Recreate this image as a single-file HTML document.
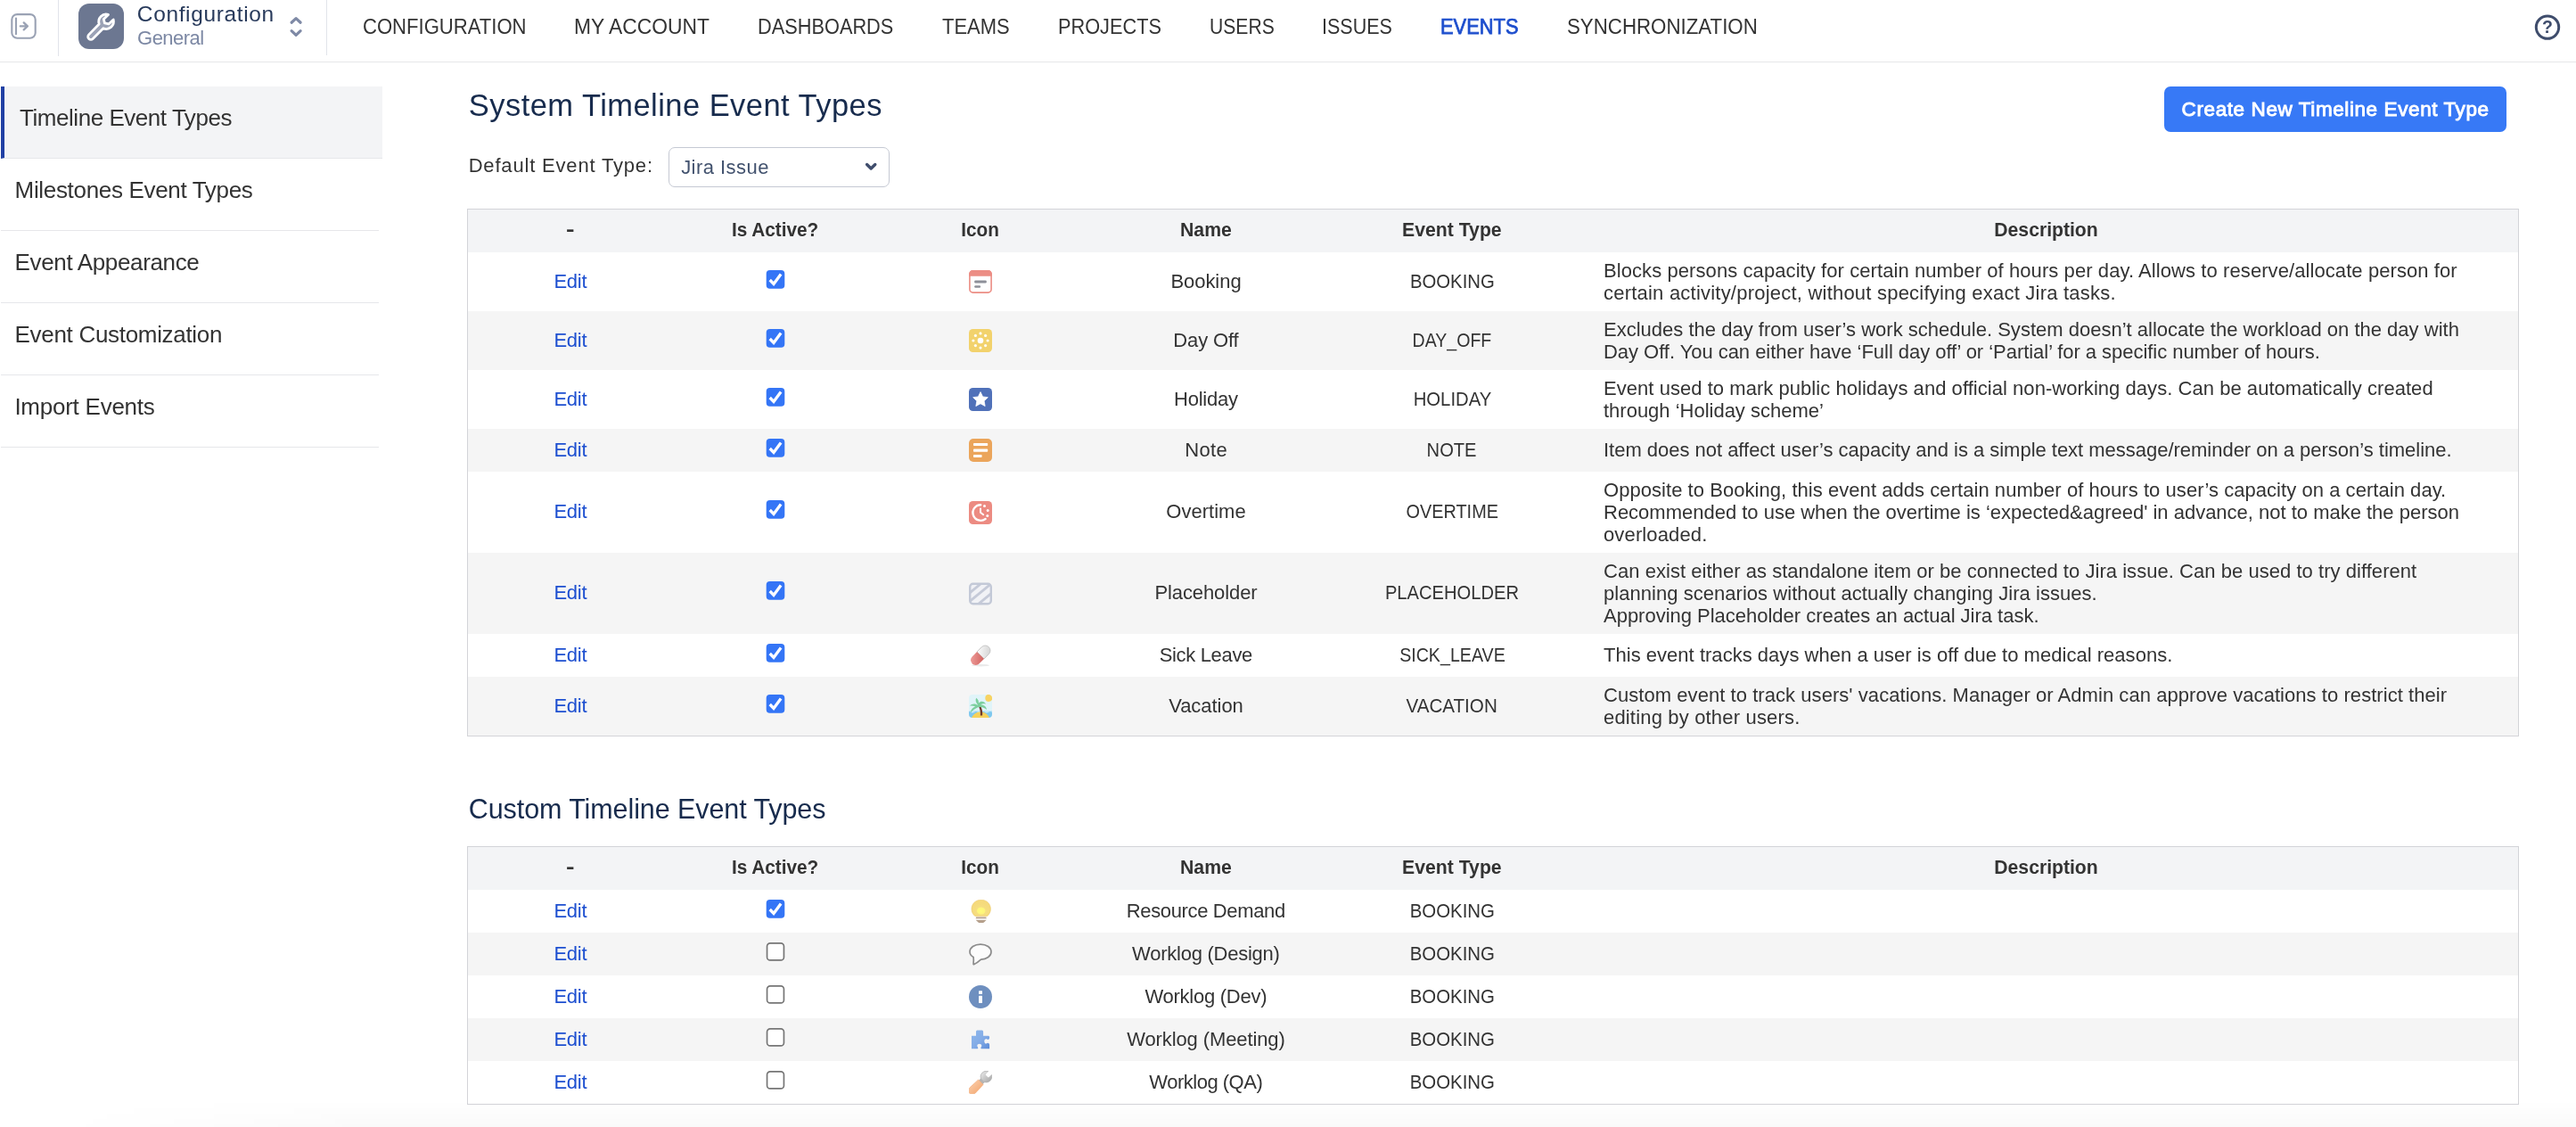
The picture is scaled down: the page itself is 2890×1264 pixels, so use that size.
<!DOCTYPE html>
<html lang="en"><head><meta charset="utf-8"><title>Timeline Event Types</title>
<style>
html,body{margin:0;padding:0}
body{width:2890px;height:1264px;position:relative;overflow:hidden;background:#fff;font-family:"Liberation Sans",sans-serif;color:#333}
#app{position:absolute;left:0;top:0;width:2890px;height:1264px;overflow:hidden;background:#fff;will-change:transform}
.t{position:absolute;white-space:nowrap;margin:0;padding:0;font-weight:400}
.abs{position:absolute}
.sb{-webkit-text-stroke:0.9px currentColor}
.sb2{-webkit-text-stroke:0.75px currentColor}
header{position:absolute;left:0;top:0;width:2890px;height:69px;border-bottom:1px solid #e6e7e9;background:#fff}
.vdiv{position:absolute;top:0;width:1px;height:63px;background:#e1e4ea}
a{text-decoration:none}
.side li{list-style:none}
.sbg{position:absolute;left:1px;width:424px;height:80px;border-bottom:1px solid #e6e7ea}
.sbg.act{background:#f3f4f6;border-left:4px solid #2040a4}
.side{margin:0;padding:0}
.tbl{position:absolute;left:524px;width:2302px;border:1px solid #d3d4d8;border-collapse:separate;border-spacing:0;table-layout:fixed;font-size:22px;line-height:25px;color:#333}
.tbl th,.tbl td{padding:0;text-align:center;vertical-align:middle;white-space:nowrap;font-weight:400}
.tbl th{height:48px;background:#f3f4f6;font-weight:700;color:#333}
.tbl th span{display:inline-block;position:relative;top:-2px}
.tbl tr.g td{background:#f5f5f5}
.tbl td.d{text-align:left;padding-left:32px}
.tbl a{color:#1d4fd0;text-decoration:none;position:relative;top:-1px}
.tbl .nm{position:relative;top:-1px}
.tbl .et{display:inline-block;transform:scaleX(0.905);position:relative;top:-1px}
.ic{display:block;margin:0 auto}
.cb{display:inline-block;width:22px;height:21px;vertical-align:top;position:relative;top:-1px}
.cb svg{display:block}
</style></head>
<body>
<div id="app">
<header>
<svg class="abs" style="left:10px;top:13px" width="33" height="33" viewBox="0 0 33 33"><rect x="3.300" y="3.100" width="26.400" height="26.600" rx="6" fill="none" stroke="#9aa2b4" stroke-width="2.100"/><path d="M8 7.500v17.800" stroke="#9aa2b4" stroke-width="2.100" stroke-linecap="round" fill="none"/><path d="M12.800 16.400h7.600M16.700 12.400l4.200 4-4.200 4" stroke="#9aa2b4" stroke-width="2.300" stroke-linecap="round" stroke-linejoin="round" fill="none"/></svg>
<div class="vdiv" style="left:65px"></div>
<svg class="abs" style="left:88px;top:4px" width="51" height="51" viewBox="0 0 51 51"><rect width="51" height="51" rx="12" fill="#6c7791"/><g transform="translate(0.2,0.5) scale(1.065)"><path d="M31.300 11.200a7.800 7.800 0 0 0-9.700 9.900L10.700 32.300a3 3 0 0 0 0 4.200l.100.100a3 3 0 0 0 4.200 0L26 25.600a7.800 7.800 0 0 0 10.600-9.200l-4.900 4.700-4.300-1-1-4.200z" fill="#9ba2b6" stroke="#fff" stroke-width="2.600" stroke-linejoin="round"/></g></svg>
<div class="t" style="left:153.82px;top:0.50px;font-size:24.5px;line-height:30px;color:#283a5b;letter-spacing:0.629px;">Configuration</div>
<div class="t" style="left:154.06px;top:29.50px;font-size:22px;line-height:26px;color:#7c88a4;letter-spacing:-0.516px;">General</div>
<svg class="abs" style="left:322px;top:16px" width="20" height="28" viewBox="0 0 20 28"><path d="M5.100 9.200l5-4.600 5 4.600M5.100 18.700l5 4.700 5-4.700" fill="none" stroke="#7f8aa6" stroke-width="3.200" stroke-linecap="round" stroke-linejoin="round"/></svg>
<div class="vdiv" style="left:366px;height:62px"></div>
<nav>
<a class="t" style="left:407.18px;top:16.00px;font-size:23.5px;line-height:28px;color:#333;transform:scaleX(0.9393);transform-origin:0 0;">CONFIGURATION</a>
<a class="t" style="left:643.99px;top:16.00px;font-size:23.5px;line-height:28px;color:#333;transform:scaleX(0.9717);transform-origin:0 0;">MY ACCOUNT</a>
<a class="t" style="left:849.99px;top:16.00px;font-size:23.5px;line-height:28px;color:#333;transform:scaleX(0.9259);transform-origin:0 0;">DASHBOARDS</a>
<a class="t" style="left:1056.55px;top:16.00px;font-size:23.5px;line-height:28px;color:#333;transform:scaleX(0.9350);transform-origin:0 0;">TEAMS</a>
<a class="t" style="left:1186.78px;top:16.00px;font-size:23.5px;line-height:28px;color:#333;transform:scaleX(0.9248);transform-origin:0 0;">PROJECTS</a>
<a class="t" style="left:1356.90px;top:16.00px;font-size:23.5px;line-height:28px;color:#333;transform:scaleX(0.8985);transform-origin:0 0;">USERS</a>
<a class="t" style="left:1482.99px;top:16.00px;font-size:23.5px;line-height:28px;color:#333;transform:scaleX(0.9156);transform-origin:0 0;">ISSUES</a>
<a class="t sb2" style="left:1615.95px;top:16.00px;font-size:23.2px;line-height:28px;color:#1d4ecd;transform:scaleX(0.9429);transform-origin:0 0;">EVENTS</a>
<a class="t" style="left:1758.44px;top:16.00px;font-size:23.5px;line-height:28px;color:#333;transform:scaleX(0.9484);transform-origin:0 0;">SYNCHRONIZATION</a>
</nav>
<svg class="abs" style="left:2840px;top:13px" width="36" height="36" viewBox="0 0 36 36"><circle cx="18" cy="17.600" r="12.700" fill="none" stroke="#3f4d6c" stroke-width="3"/><text x="18" y="24.300" text-anchor="middle" font-family="Liberation Sans, sans-serif" font-weight="700" font-size="19.500" fill="#3f4d6c">?</text></svg>
</header>
<ul class="side">
<li><div class="sbg act" style="top:97px"></div><a class="t" style="left:22.06px;top:115.60px;font-size:26px;line-height:32px;color:#333;letter-spacing:-0.461px;">Timeline Event Types</a></li>
<li><div class="sbg" style="top:178px"></div><a class="t" style="left:16.58px;top:196.60px;font-size:26px;line-height:32px;color:#333;letter-spacing:-0.329px;">Milestones Event Types</a></li>
<li><div class="sbg" style="top:259px"></div><a class="t" style="left:16.58px;top:277.60px;font-size:26px;line-height:32px;color:#333;letter-spacing:-0.353px;">Event Appearance</a></li>
<li><div class="sbg" style="top:340px"></div><a class="t" style="left:16.58px;top:358.60px;font-size:26px;line-height:32px;color:#333;letter-spacing:-0.311px;">Event Customization</a></li>
<li><div class="sbg" style="top:421px"></div><a class="t" style="left:16.38px;top:439.60px;font-size:26px;line-height:32px;color:#333;letter-spacing:-0.248px;">Import Events</a></li>
</ul>
<main>
<h1 class="t" style="left:525.77px;top:95.80px;font-size:34.5px;line-height:44px;color:#172b4d;letter-spacing:0.452px;">System Timeline Event Types</h1>
<div class="abs" style="left:2428px;top:97px;width:384px;height:51px;border-radius:7px;background:#3779f6"></div>
<div class="t sb" style="left:2447.60px;top:109.20px;font-size:22.5px;line-height:28px;color:#fff;letter-spacing:0.595px;">Create New Timeline Event Type</div>
<div class="t" style="left:525.64px;top:172.30px;font-size:22px;line-height:28px;color:#333;letter-spacing:0.821px;">Default Event Type:</div>
<div class="abs" style="left:750px;top:165px;width:246px;height:43px;border:1px solid #c5c9d3;border-radius:7px;background:#fff"></div>
<div class="t" style="left:764.17px;top:174.10px;font-size:22px;line-height:28px;color:#42526e;letter-spacing:0.462px;">Jira Issue</div>
<svg class="abs" style="left:966px;top:178px" width="22" height="18" viewBox="0 0 22 18"><path d="M6.600 6.500l4.600 4.500 4.600-4.500" fill="none" stroke="#3f4d6c" stroke-width="3.400" stroke-linecap="round" stroke-linejoin="round"/></svg>
<table class="tbl" style="top:234px"><colgroup><col style="width:230px"><col style="width:230px"><col style="width:230px"><col style="width:276px"><col style="width:276px"><col style="width:1058px"></colgroup><thead><tr><th><span style="transform:scaleX(1.3);top:-3px">-</span></th><th><span style="transform:scaleX(0.9435)">Is Active?</span></th><th><span style="transform:scaleX(0.9422)">Icon</span></th><th><span style="transform:scaleX(0.9656)">Name</span></th><th><span style="transform:scaleX(0.9637)">Event Type</span></th><th><span style="transform:scaleX(0.9619)">Description</span></th></tr></thead><tbody>
<tr style="height:66px"><td><a style="letter-spacing:-0.240px;margin-right:0.240px">Edit</a></td><td><span class="cb"><svg width="22" height="21" viewBox="0 0 22 21"><rect x="0.700" y="0" width="20.600" height="20.800" rx="4" fill="#3475f6"/><path d="M4.700 11l4.300 4.400 8.100-10.800" fill="none" stroke="#fff" stroke-width="3.300" stroke-linejoin="miter"/></svg></span></td><td><svg class="ic" width="26" height="26" viewBox="0 0 26 26"><rect x="0.9" y="0.9" width="24.2" height="24.2" rx="3.6" fill="#fff" stroke="#ec8d84" stroke-width="1.6"/><path d="M0 4.5a4.5 4.5 0 0 1 4.5-4.5h17a4.5 4.5 0 0 1 4.5 4.5v2.3h-26z" fill="#ec8d84"/><rect x="6.2" y="11.4" width="13.6" height="3" rx="1.2" fill="#8e9099"/><rect x="6.2" y="17.3" width="6.9" height="2.5" rx="1.2" fill="#8e9099"/></svg></td><td><span class="nm" style="letter-spacing:-0.044px;margin-right:0.044px">Booking</span></td><td><span class="et" style="transform:scaleX(0.9230)">BOOKING</span></td><td class="d"><span style="letter-spacing:0.082px">Blocks persons capacity for certain number of hours per day. Allows to reserve/allocate person for</span> <br><span style="letter-spacing:0.218px">certain activity/project, without specifying exact Jira tasks.</span></td></tr>
<tr class="g" style="height:66px"><td><a style="letter-spacing:-0.235px;margin-right:0.235px">Edit</a></td><td><span class="cb"><svg width="22" height="21" viewBox="0 0 22 21"><rect x="0.700" y="0" width="20.600" height="20.800" rx="4" fill="#3475f6"/><path d="M4.700 11l4.300 4.400 8.100-10.800" fill="none" stroke="#fff" stroke-width="3.300" stroke-linejoin="miter"/></svg></span></td><td><svg class="ic" width="26" height="26" viewBox="0 0 26 26"><rect width="26" height="26" rx="4.5" fill="#f2d26c"/><circle cx="13" cy="13" r="3.3" fill="#fff"/><g fill="#fffdf3"><circle cx="13" cy="4.9" r="1.6"/><circle cx="13" cy="21.1" r="1.6"/><circle cx="4.9" cy="13" r="1.6"/><circle cx="21.1" cy="13" r="1.6"/><circle cx="7.4" cy="7.4" r="1.6"/><circle cx="18.6" cy="7.4" r="1.6"/><circle cx="7.4" cy="18.6" r="1.6"/><circle cx="18.6" cy="18.6" r="1.6"/></g></svg></td><td><span class="nm" style="letter-spacing:-0.149px;margin-right:0.149px">Day Off</span></td><td><span class="et" style="transform:scaleX(0.8883)">DAY_OFF</span></td><td class="d"><span style="letter-spacing:0.008px">Excludes the day from user’s work schedule. System doesn’t allocate the workload on the day with</span> <br><span style="letter-spacing:-0.041px">Day Off. You can either have ‘Full day off’ or ‘Partial’ for a specific number of hours.</span></td></tr>
<tr style="height:66px"><td><a style="letter-spacing:-0.240px;margin-right:0.240px">Edit</a></td><td><span class="cb"><svg width="22" height="21" viewBox="0 0 22 21"><rect x="0.700" y="0" width="20.600" height="20.800" rx="4" fill="#3475f6"/><path d="M4.700 11l4.300 4.400 8.100-10.800" fill="none" stroke="#fff" stroke-width="3.300" stroke-linejoin="miter"/></svg></span></td><td><svg class="ic" width="26" height="26" viewBox="0 0 26 26"><rect width="26" height="26" rx="4.5" fill="#5071b9"/><path d="M13 4.6l2.55 5.3 5.75.75-4.2 4.05 1.05 5.8-5.15-2.8-5.15 2.8 1.05-5.8-4.2-4.05 5.75-.75z" fill="#fff" stroke="#fff" stroke-width="0.8" stroke-linejoin="round"/></svg></td><td><span class="nm" style="letter-spacing:-0.236px;margin-right:0.236px">Holiday</span></td><td><span class="et" style="transform:scaleX(0.9226)">HOLIDAY</span></td><td class="d"><span style="letter-spacing:0.044px">Event used to mark public holidays and official non-working days. Can be automatically created</span> <br><span style="letter-spacing:-0.008px">through ‘Holiday scheme’</span></td></tr>
<tr class="g" style="height:48px"><td><a style="letter-spacing:-0.235px;margin-right:0.235px">Edit</a></td><td><span class="cb"><svg width="22" height="21" viewBox="0 0 22 21"><rect x="0.700" y="0" width="20.600" height="20.800" rx="4" fill="#3475f6"/><path d="M4.700 11l4.300 4.400 8.100-10.800" fill="none" stroke="#fff" stroke-width="3.300" stroke-linejoin="miter"/></svg></span></td><td><svg class="ic" width="26" height="26" viewBox="0 0 26 26"><rect width="26" height="26" rx="5" fill="#eba55b"/><rect x="5" y="5" width="16.2" height="3.1" rx="0.8" fill="#fff"/><rect x="5" y="11.6" width="16.2" height="3.1" rx="0.8" fill="#fff"/><rect x="5" y="18" width="9.6" height="3.1" rx="0.8" fill="#fff"/></svg></td><td><span class="nm" style="letter-spacing:0.305px;margin-right:-0.305px">Note</span></td><td><span class="et" style="transform:scaleX(0.9143)">NOTE</span></td><td class="d"><span style="position:relative;top:-1px"><span style="letter-spacing:-0.019px">Item does not affect user’s capacity and is a simple text message/reminder on a person’s timeline.</span></span></td></tr>
<tr style="height:91px"><td><a style="letter-spacing:-0.240px;margin-right:0.240px">Edit</a></td><td><span class="cb"><svg width="22" height="21" viewBox="0 0 22 21"><rect x="0.700" y="0" width="20.600" height="20.800" rx="4" fill="#3475f6"/><path d="M4.700 11l4.300 4.400 8.100-10.800" fill="none" stroke="#fff" stroke-width="3.300" stroke-linejoin="miter"/></svg></span></td><td><svg class="ic" width="26" height="26" viewBox="0 0 26 26"><rect width="26" height="26" rx="4.5" fill="#ec8b82"/><path d="M13.2 4.2a8.8 8.8 0 1 0 5.4 15.8" fill="none" stroke="#fff" stroke-width="2.4" stroke-linecap="round"/><path d="M13 8.6v4.2l3.2 2.4" fill="none" stroke="#fff" stroke-width="2" stroke-linecap="round" stroke-linejoin="round"/><circle cx="17.5" cy="5.6" r="1.5" fill="#fff"/><circle cx="21.2" cy="10.6" r="1.5" fill="#fff"/><circle cx="20.8" cy="16.6" r="1.5" fill="#fff"/></svg></td><td><span class="nm" style="letter-spacing:0.025px;margin-right:-0.025px">Overtime</span></td><td><span class="et" style="transform:scaleX(0.9022)">OVERTIME</span></td><td class="d"><span style="letter-spacing:0.050px">Opposite to Booking, this event adds certain number of hours to user’s capacity on a certain day.</span> <br><span style="letter-spacing:-0.007px">Recommended to use when the overtime is ‘expected&amp;agreed' in advance, not to make the person</span> <br><span style="letter-spacing:0.135px">overloaded.</span></td></tr>
<tr class="g" style="height:91px"><td><a style="letter-spacing:-0.235px;margin-right:0.235px">Edit</a></td><td><span class="cb"><svg width="22" height="21" viewBox="0 0 22 21"><rect x="0.700" y="0" width="20.600" height="20.800" rx="4" fill="#3475f6"/><path d="M4.700 11l4.300 4.400 8.100-10.800" fill="none" stroke="#fff" stroke-width="3.300" stroke-linejoin="miter"/></svg></span></td><td><svg class="ic" width="26" height="26" viewBox="0 0 26 26"><defs><clipPath id="phc"><rect x="1.2" y="1.800" width="23.6" height="22.400" rx="3.4"/></clipPath></defs><rect x="1.2" y="1.800" width="23.6" height="22.400" rx="3.4" fill="#f1f2f6"/><g clip-path="url(#phc)" stroke="#c5cad8" stroke-width="2.800"><path d="M-2 14.300L28 -10.300"/><path d="M-2 23.800L28 -0.800"/><path d="M-2 34.800L28 10.200"/></g><rect x="1.2" y="1.800" width="23.6" height="22.400" rx="3.4" fill="none" stroke="#c3c9d7" stroke-width="2.4"/></svg></td><td><span class="nm" style="letter-spacing:-0.099px;margin-right:0.099px">Placeholder</span></td><td><span class="et" style="transform:scaleX(0.9158)">PLACEHOLDER</span></td><td class="d"><span style="letter-spacing:0.042px">Can exist either as standalone item or be connected to Jira issue. Can be used to try different</span> <br><span style="letter-spacing:0.039px">planning scenarios without actually changing Jira issues.</span> <br><span style="letter-spacing:-0.013px">Approving Placeholder creates an actual Jira task.</span></td></tr>
<tr style="height:48px"><td><a style="letter-spacing:-0.240px;margin-right:0.240px">Edit</a></td><td><span class="cb"><svg width="22" height="21" viewBox="0 0 22 21"><rect x="0.700" y="0" width="20.600" height="20.800" rx="4" fill="#3475f6"/><path d="M4.700 11l4.300 4.400 8.100-10.800" fill="none" stroke="#fff" stroke-width="3.300" stroke-linejoin="miter"/></svg></span></td><td><svg class="ic" width="26" height="26" viewBox="0 0 26 26"><defs><linearGradient id="pg1" x1="0" y1="0" x2="1" y2="1"><stop offset="0" stop-color="#fdfdfd"/><stop offset="1" stop-color="#cfcfcf"/></linearGradient><linearGradient id="pg2" x1="0" y1="0" x2="1" y2="1"><stop offset="0" stop-color="#f0a3a0"/><stop offset="1" stop-color="#d2625f"/></linearGradient></defs><ellipse cx="13" cy="24.2" rx="10" ry="1.3" fill="#e9e9e9"/><g transform="rotate(-45 13 13)"><path d="M13 7.4h7.6a5.6 5.6 0 0 1 0 11.2H13z" fill="url(#pg1)" stroke="#bdbdbd" stroke-width="0.8"/><path d="M13 7.4H5.4a5.6 5.6 0 0 0 0 11.2H13z" fill="url(#pg2)"/></g></svg></td><td><span class="nm" style="letter-spacing:-0.330px;margin-right:0.330px">Sick Leave</span></td><td><span class="et" style="transform:scaleX(0.8926)">SICK_LEAVE</span></td><td class="d"><span style="position:relative;top:-1px"><span style="letter-spacing:0.025px">This event tracks days when a user is off due to medical reasons.</span></span></td></tr>
<tr class="g" style="height:66px"><td><a style="letter-spacing:-0.235px;margin-right:0.235px">Edit</a></td><td><span class="cb"><svg width="22" height="21" viewBox="0 0 22 21"><rect x="0.700" y="0" width="20.600" height="20.800" rx="4" fill="#3475f6"/><path d="M4.700 11l4.300 4.400 8.100-10.800" fill="none" stroke="#fff" stroke-width="3.300" stroke-linejoin="miter"/></svg></span></td><td><svg class="ic" width="26" height="26" viewBox="0 0 26 26"><defs><clipPath id="vcc"><rect width="26" height="26" rx="4"/></clipPath></defs><g clip-path="url(#vcc)"><rect width="26" height="26" fill="#e0f4f9"/><rect y="18.300" width="26" height="7.700" fill="#7fc8ee"/><path d="M0 18.300h26v1.500c-1.500-1-2.500-1-4 0s-2.500 1-4 0-2.500-1-4 0-2.500 1-4 0-2.500-1-4 0-2.500 1-4 0-2 -.7-2-.7z" fill="#c9ebf8"/><circle cx="22.300" cy="3.900" r="4" fill="#f7d362"/><path d="M3 26c2.500-4.600 6-6.400 10-6.400s7.500 1.800 10 6.400z" fill="#f6d15a"/><path d="M12.800 23.600c.5-4.200-.5-8.200-2.800-11.800l2.100-.9c2.600 3.900 3.600 8.300 3 12.700z" fill="#70392b"/><path d="M10.700 12.300c-3.700-2.500-7.200-2.200-9.800.3 2.500-.3 4.600.1 6.200 1-2.900 1-4.900 3.400-5.500 7 2.700-3 5.700-5 9.200-6.600 3.500-.5 6.600.6 9.300 3-.6-3.700-3.500-5.700-6.900-5.800 1.900-1.100 3.900-1.300 6-.5-1.900-3.300-5.600-4.100-8.300-1.200 .3-2.300-.7-4.200-2.700-5.700-1.300 2.400-.5 5.400 2.500 8.500z" fill="#7ccf9e"/></g></svg></td><td><span class="nm" style="letter-spacing:-0.052px;margin-right:0.052px">Vacation</span></td><td><span class="et" style="transform:scaleX(0.9374)">VACATION</span></td><td class="d"><span style="letter-spacing:0.055px">Custom event to track users' vacations. Manager or Admin can approve vacations to restrict their</span> <br><span style="letter-spacing:0.172px">editing by other users.</span></td></tr>
</tbody></table>
<h2 class="t" style="left:525.80px;top:888.00px;font-size:30.5px;line-height:38px;color:#172b4d;letter-spacing:-0.088px;">Custom Timeline Event Types</h2>
<table class="tbl" style="top:949px"><colgroup><col style="width:230px"><col style="width:230px"><col style="width:230px"><col style="width:276px"><col style="width:276px"><col style="width:1058px"></colgroup><thead><tr><th><span style="transform:scaleX(1.3);top:-3px">-</span></th><th><span style="transform:scaleX(0.9435)">Is Active?</span></th><th><span style="transform:scaleX(0.9422)">Icon</span></th><th><span style="transform:scaleX(0.9656)">Name</span></th><th><span style="transform:scaleX(0.9637)">Event Type</span></th><th><span style="transform:scaleX(0.9619)">Description</span></th></tr></thead><tbody>
<tr style="height:48px"><td><a style="letter-spacing:-0.240px;margin-right:0.240px">Edit</a></td><td><span class="cb"><svg width="22" height="21" viewBox="0 0 22 21"><rect x="0.700" y="0" width="20.600" height="20.800" rx="4" fill="#3475f6"/><path d="M4.700 11l4.300 4.400 8.100-10.800" fill="none" stroke="#fff" stroke-width="3.300" stroke-linejoin="miter"/></svg></span></td><td><svg class="ic" width="26" height="26" viewBox="0 0 26 26"><defs><radialGradient id="bg1" cx="0.5" cy="0.68" r="0.5"><stop offset="0" stop-color="#fffb7a"/><stop offset="0.4" stop-color="#fdf47a"/><stop offset="0.48" stop-color="#f6de80"/><stop offset="1" stop-color="#f5da7c"/></radialGradient></defs><path d="M13.7 0.200c-6.200 0-10.700 4.600-10.700 10.200 0 3.500 1.500 6.100 3.800 8h13.800c2.300-1.900 3.800-4.500 3.800-8 0-5.600-4.500-10.200-10.700-10.200z" fill="url(#bg1)" stroke="#ecc766" stroke-width="0.6"/><rect x="7.800" y="19.600" width="11.800" height="1.700" rx="0.6" fill="#b5a08c"/><rect x="7.800" y="21.300" width="11.800" height="1.800" fill="#efebe7"/><path d="M7.900 23.100h11.600l-2.600 2.300c-.5.400-1.100.5-3.200.5s-2.700-.1-3.200-.5z" fill="#b5a08c"/></svg></td><td><span class="nm" style="letter-spacing:-0.357px;margin-right:0.357px">Resource Demand</span></td><td><span class="et" style="transform:scaleX(0.9282)">BOOKING</span></td><td class="d"></td></tr>
<tr class="g" style="height:48px"><td><a style="letter-spacing:-0.235px;margin-right:0.235px">Edit</a></td><td><span class="cb"><svg width="22" height="21" viewBox="0 0 22 21"><rect x="1.550" y="0.850" width="18.900" height="19.100" rx="3.500" fill="#fff" stroke="#767676" stroke-width="1.700"/></svg></span></td><td><svg class="ic" width="26" height="26" viewBox="0 0 26 26"><path d="M13 2.100c6.800 0 12 3.700 12 8.500 0 4.700-5 8.300-11.500 8.500-1.900 1.700-4.500 3.900-7.700 5.500-.5.200-.9-.1-.8-.7.300-2.200.5-4.700.1-7.300-2.600-1.500-4.100-3.600-4.100-6 0-4.800 5.200-8.500 12-8.500z" fill="#fcfcfc" stroke="#8c8c8c" stroke-width="1.7" stroke-linejoin="round"/></svg></td><td><span class="nm" style="letter-spacing:-0.245px;margin-right:0.245px">Worklog (Design)</span></td><td><span class="et" style="transform:scaleX(0.9280)">BOOKING</span></td><td class="d"></td></tr>
<tr style="height:48px"><td><a style="letter-spacing:-0.240px;margin-right:0.240px">Edit</a></td><td><span class="cb"><svg width="22" height="21" viewBox="0 0 22 21"><rect x="1.550" y="0.850" width="18.900" height="19.100" rx="3.500" fill="#fff" stroke="#767676" stroke-width="1.700"/></svg></span></td><td><svg class="ic" width="26" height="26" viewBox="0 0 26 26"><circle cx="13" cy="13" r="13" fill="#6e8fbf"/><rect x="11.100" y="6.300" width="3.900" height="3.700" rx="0.5" fill="#fff"/><rect x="11.100" y="11.700" width="3.900" height="8.300" rx="0.5" fill="#fff"/></svg></td><td><span class="nm" style="letter-spacing:-0.261px;margin-right:0.261px">Worklog (Dev)</span></td><td><span class="et" style="transform:scaleX(0.9282)">BOOKING</span></td><td class="d"></td></tr>
<tr class="g" style="height:48px"><td><a style="letter-spacing:-0.235px;margin-right:0.235px">Edit</a></td><td><span class="cb"><svg width="22" height="21" viewBox="0 0 22 21"><rect x="1.550" y="0.850" width="18.900" height="19.100" rx="3.500" fill="#fff" stroke="#767676" stroke-width="1.700"/></svg></span></td><td><svg class="ic" width="26" height="26" viewBox="0 0 26 26"><defs><linearGradient id="pz1" x1="0" y1="0" x2="1" y2="1"><stop offset="0" stop-color="#8fb8ec"/><stop offset="0.55" stop-color="#82abe6"/><stop offset="1" stop-color="#5b8bd8"/></linearGradient></defs><path d="M9.900 2.600h4.200c1.400 0 2 .6 2 2v4.200h5.200c1.300 0 1.800.5 1.800 1.700 0 1.500-.6 2.500-1.700 2.500-.9 0-1.200-.7-2.100-.7-1.200 0-2 1.100-2 2.600s.8 2.600 2 2.600c.9 0 1.200-.7 2.100-.7 1.100 0 1.700.9 1.700 2.300v4.100h-8.800c-.7 0-1-.4-.9-1 .2-.900.900-1.400.9-2.400 0-1.300-1.100-2.100-2.500-2.100s-2.500.8-2.500 2.100c0 1 .7 1.500.9 2.400.1.600-.2 1-.9 1h-6.300v-14.400h5v-4.200c0-1.400.6-2 1.900-2z" fill="url(#pz1)"/></svg></td><td><span class="nm" style="letter-spacing:-0.103px;margin-right:0.103px">Worklog (Meeting)</span></td><td><span class="et" style="transform:scaleX(0.9280)">BOOKING</span></td><td class="d"></td></tr>
<tr style="height:48px"><td><a style="letter-spacing:-0.240px;margin-right:0.240px">Edit</a></td><td><span class="cb"><svg width="22" height="21" viewBox="0 0 22 21"><rect x="1.550" y="0.850" width="18.900" height="19.100" rx="3.500" fill="#fff" stroke="#767676" stroke-width="1.700"/></svg></span></td><td><svg class="ic" width="26" height="26" viewBox="0 0 26 26"><defs><linearGradient id="wr1" x1="0" y1="0" x2="1" y2="1"><stop offset="0" stop-color="#fbd3b3"/><stop offset="1" stop-color="#f3a268"/></linearGradient><linearGradient id="wr2" x1="0" y1="0" x2="1" y2="1"><stop offset="0" stop-color="#ececec"/><stop offset="1" stop-color="#a3a3a3"/></linearGradient><mask id="wm"><rect width="26" height="26" fill="#fff"/><rect x="-2.4" y="-10" width="4.800" height="10.6" rx="1" transform="translate(20.600,5.500) rotate(45)" fill="#000"/></mask></defs><g mask="url(#wm)"><circle cx="19.400" cy="6.600" r="6.300" fill="url(#wr2)" stroke="#a9a9a9" stroke-width="0.7"/></g><path d="M13.200 8.600l4.400 4.400-2.300 2.300-4.400-4.400z" fill="#b4b4b4"/><path d="M10.600 9.900l5.500 5.500-8.900 9.700c-.5.500-1 .7-1.700.7h-3.500c-1 0-1.700-.7-1.700-1.700v-3.600c0-.7.200-1.200.7-1.700z" fill="url(#wr1)" stroke="#f3a772" stroke-width="0.6"/></svg></td><td><span class="nm" style="letter-spacing:-0.484px;margin-right:0.484px">Worklog (QA)</span></td><td><span class="et" style="transform:scaleX(0.9282)">BOOKING</span></td><td class="d"></td></tr>
</tbody></table>
</main>
<div class="abs" style="left:0;top:1234px;width:2890px;height:30px;background:linear-gradient(to bottom,rgba(0,0,0,0),rgba(0,0,0,0.018));-webkit-mask-image:linear-gradient(to right,transparent 60px,#000 420px);mask-image:linear-gradient(to right,transparent 60px,#000 420px)"></div>
</div>
<script>(function(){var w=window.innerWidth||2890;if(w>0&&Math.abs(w-2890)>2){var a=document.getElementById("app");a.style.transformOrigin="0 0";a.style.transform="scale("+(w/2890)+")";}})();</script>
</body></html>
